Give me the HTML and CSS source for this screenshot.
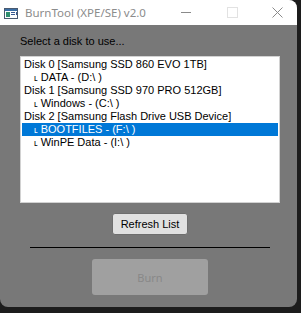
FILE: index.html
```html
<!DOCTYPE html>
<html lang="en">
<head>
  <meta charset="UTF-8" />
  <title>BurnTool (XPE/SE) v2.0</title>
  <link rel="stylesheet" href="styles.css">
</head>
<body>
  <div class="window">
    <div class="titlebar">
      <svg class="app-icon" width="14" height="11" viewBox="0 0 14 11">
        <rect x="0.5" y="0.5" width="13" height="10" fill="#fff" stroke="#4a5a70"/>
        <rect x="1" y="1" width="12" height="2" fill="#3a6ea5"/>
        <rect x="2" y="4" width="4" height="5" fill="#2f8f6f"/>
        <rect x="7" y="4" width="4" height="1" fill="#3a5a90"/>
        <rect x="7" y="6" width="4" height="1" fill="#3a5a90"/>
        <rect x="12" y="4" width="1" height="3" fill="#3a5a90"/>
      </svg>
      <span class="title">BurnTool (XPE/SE) v2.0</span>
      <span class="ctl ctl-min"></span>
      <span class="ctl ctl-max"></span>
      <svg class="ctl-close" width="11" height="11" viewBox="0 0 11 11">
        <path d="M0.5 0.5 L10.5 10.5 M10.5 0.5 L0.5 10.5" stroke="#8a8a8a" stroke-width="1"/>
      </svg>
    </div>

    <div class="content">
      <div class="label">Select a disk to use...</div>
      <ul class="listbox">
        <li>Disk 0 [Samsung SSD 860 EVO 1TB]</li>
        <li class="child"><span class="tick">ʟ</span> DATA - (D:\ )</li>
        <li>Disk 1 [Samsung SSD 970 PRO 512GB]</li>
        <li class="child"><span class="tick">ʟ</span> Windows - (C:\ )</li>
        <li>Disk 2 [Samsung Flash Drive USB Device]</li>
        <li class="child selected"><span class="tick">ʟ</span> BOOTFILES - (F:\ )</li>
        <li class="child"><span class="tick">ʟ</span> WinPE Data - (I:\ )</li>
      </ul>
      <button class="btn-refresh">Refresh List</button>
      <div class="separator"></div>
      <button class="btn-burn" disabled>Burn</button>
    </div>
  </div>
</body>
</html>
```

FILE: styles.css
```css
html, body {
  margin: 0;
  padding: 0;
  background: #1c1c1c;
  overflow: hidden;
}

.window {
  width: 297px;
  height: 307px;
  background: #787878;
  border-radius: 0 8px 8px 8px;
  overflow: hidden;
  display: flex;
  flex-direction: column;
}

.titlebar {
  height: 25px;
  background: #fff;
  display: flex;
  align-items: center;
  position: relative;
}

.app-icon {
  margin-left: 4px;
  margin-top: 1px;
}

.title {
  margin-left: 7px;
  font-family: "Noto Sans", "Open Sans", sans-serif;
  font-size: 11.5px;
  color: #8c8c8c;
}

.ctl-min {
  position: absolute;
  left: 181px;
  top: 12px;
  width: 10px;
  height: 1px;
  background: #8a8a8a;
}

.ctl-max {
  position: absolute;
  left: 227px;
  top: 7px;
  width: 9px;
  height: 9px;
  border: 1px solid #e2e2e2;
}

.ctl-close {
  position: absolute;
  left: 272px;
  top: 7px;
}

.content {
  display: flex;
  flex-direction: column;
  align-items: center;
  width: 258px;
  margin-left: 21px;
  font-family: "Liberation Sans", Arial, sans-serif;
  font-size: 11px;
}

.label {
  align-self: flex-start;
  margin-top: 10px;
  margin-left: -1px;
  line-height: 13px;
  color: #000;
}

.listbox {
  list-style: none;
  margin: 8px 0 0 0;
  padding: 1px 1px 0 1px;
  width: 256px;
  height: 144px;
  background: #fff;
  border: 1px solid #d2d2d2;
  overflow: hidden;
}

.listbox li {
  height: 13px;
  line-height: 13px;
  padding-left: 2px;
  color: #000;
  white-space: nowrap;
}

.listbox li.child {
  padding-left: 12px;
}

.listbox .tick {
  font-size: 9px;
}

.listbox li.selected {
  background: #0078d7;
  color: #fff;
}

.btn-refresh {
  margin-top: 10px;
  width: 76px;
  height: 22px;
  background: #e1e1e1;
  border: 1px solid #6e6e6e;
  border-radius: 3px;
  font-family: "Liberation Sans", Arial, sans-serif;
  font-size: 11px;
  color: #000;
  padding: 0;
}

.separator {
  margin-top: 12px;
  width: 240px;
  height: 1px;
  background: #000;
}

.btn-burn {
  margin-top: 11px;
  width: 116px;
  height: 36px;
  background: #a0a0a0;
  border: none;
  border-radius: 3px;
  font-family: "Noto Sans", "Open Sans", sans-serif;
  font-size: 11px;
  color: #888;
  padding: 0;
}
```
